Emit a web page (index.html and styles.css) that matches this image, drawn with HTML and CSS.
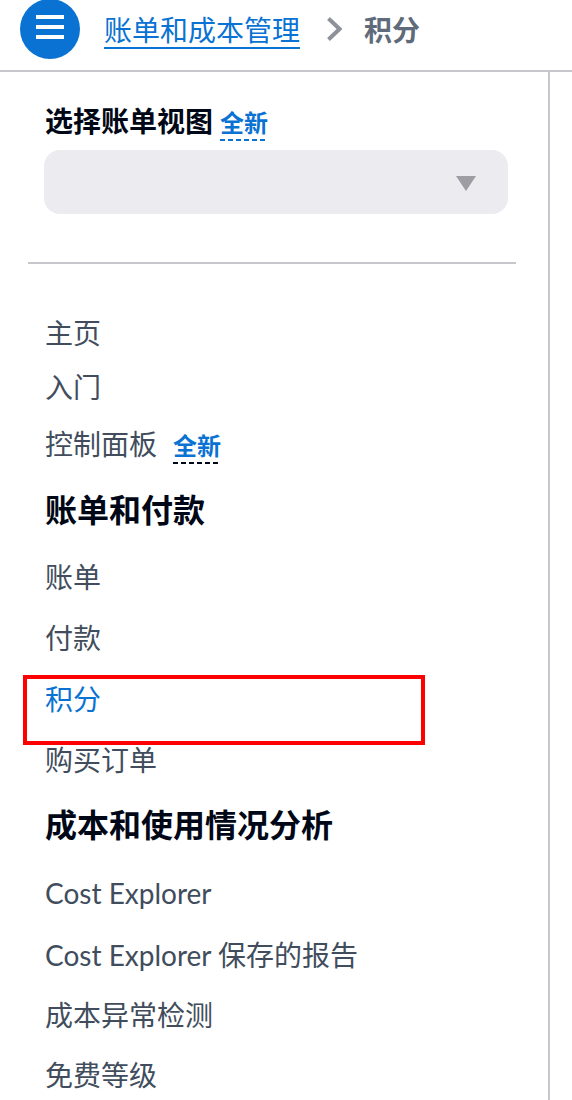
FILE: index.html
```html
<!DOCTYPE html>
<html lang="zh-CN">
<head>
<meta charset="utf-8">
<title>积分</title>
<link rel="stylesheet" href="styles.css">
</head>
<body>
<header class="top">
  <button class="menu" type="button" aria-label="打开导航">
    <span class="bar"></span><span class="bar"></span><span class="bar"></span>
  </button>
  <nav class="crumbs">
    <a class="crumb-link" href="#">账单和成本管理</a>
    <svg class="chev" width="16" height="26" viewBox="0 0 16 26" aria-hidden="true">
      <polyline points="2.5,2.5 13.5,13 2.5,23.5" fill="none" stroke="#8d9199" stroke-width="4" stroke-linejoin="miter"/>
    </svg>
    <span class="crumb-current">积分</span>
  </nav>
</header>
<div class="layout">
  <aside class="side">
    <div class="view">
      <div class="view-title">选择账单视图<span class="new new-title">全新</span></div>
      <div class="select"><span class="caret"></span></div>
    </div>
    <hr class="divider">
    <ul class="nav">
      <li class="item first">主页</li>
      <li class="item g1">入门</li>
      <li class="item g2">控制面板<span class="new new-item">全新</span></li>
      <li class="heading">账单和付款</li>
      <li class="item">账单</li>
      <li class="item">付款</li>
      <li class="item active">积分<span class="highlight"></span></li>
      <li class="item">购买订单</li>
      <li class="heading h2">成本和使用情况分析</li>
      <li class="item">Cost Explorer</li>
      <li class="item c2">Cost Explorer 保存的报告</li>
      <li class="item c3">成本异常检测</li>
      <li class="item c3">免费等级</li>
    </ul>
  </aside>
</div>
</body>
</html>
```

FILE: styles.css
```css
* { box-sizing: border-box; }
html, body { margin: 0; padding: 0; background: #ffffff; }
body {
  font-family: Lato, "Noto Sans CJK SC", sans-serif;
  color: #414d5c;
  width: 572px;
  height: 1100px;
  overflow: hidden;
}

.top {
  height: 72px;
  border-bottom: 2px solid #c6c6cd;
  display: flex;
  align-items: flex-start;
}
.menu {
  width: 60px;
  height: 60px;
  margin: -1px 0 0 20px;
  padding: 0 0 4px 0;
  border: 0;
  border-radius: 50%;
  background: #0972d3;
  display: flex;
  flex-direction: column;
  align-items: center;
  justify-content: center;
  gap: 6px;
}
.bar {
  display: block;
  width: 28px;
  height: 4px;
  background: #ffffff;
}
.crumbs {
  height: 58px;
  margin-left: 24px;
  display: flex;
  align-items: center;
}
.crumb-link {
  display: inline-block;
  font-size: 28px;
  line-height: 28px;
  color: #0972d3;
  text-decoration: none;
  padding-bottom: 3px;
  border-bottom: 2px solid #0972d3;
  margin-top: 6px;
}
.chev { margin-left: 26px; display: block; }
.crumb-current {
  margin-left: 22px;
  font-size: 28px;
  font-weight: 700;
  color: #5f6b7a;
}

.layout { display: flex; }
.side {
  width: 550px;
  height: 1028px;
  border-right: 2px solid #c6c6cd;
  padding-top: 29px;
}
.view { padding-left: 44px; }
.view-title {
  font-size: 28px;
  font-weight: 700;
  line-height: 40px;
  color: #000716;
  padding-left: 1px;
}
.new {
  display: inline-block;
  font-size: 24px;
  line-height: 24px;
  font-weight: 700;
  color: #0972d3;
  padding-bottom: 6px;
  margin-bottom: -1px;
  background-repeat: repeat-x;
  background-position: left bottom;
  background-size: 8px 2px;
}
.new-title {
  margin-left: 7px;
  background-image: linear-gradient(to right, #0972d3 0 5px, transparent 5px 8px);
}
.new-item {
  margin-left: 16px;
  background-image: linear-gradient(to right, #000716 0 5px, transparent 5px 8px);
}
.select {
  width: 464px;
  height: 64px;
  margin-top: 9px;
  border-radius: 16px;
  background: #ebebf0;
  display: flex;
  align-items: center;
  justify-content: flex-end;
  padding-right: 32px;
}
.caret {
  width: 0;
  height: 0;
  border-left: 10px solid transparent;
  border-right: 10px solid transparent;
  border-top: 15px solid #9d9da3;
  margin-top: 2px;
}
.divider {
  margin: 48px 0 0 28px;
  width: 488px;
  height: 2px;
  border: 0;
  background: #c6c6cd;
}

.nav {
  list-style: none;
  margin: 49px 0 0 0;
  padding: 0 0 0 45px;
}
.item {
  font-size: 28px;
  line-height: 40px;
  color: #414d5c;
  margin-top: 21px;
  white-space: nowrap;
}
.item.first { margin-top: 0; }
.item.g1 { margin-top: 14px; }
.item.g2 { margin-top: 17px; }
.heading {
  font-size: 32px;
  line-height: 44px;
  font-weight: 700;
  color: #000716;
  margin-top: 24px;
  white-space: nowrap;
}
.heading + .item { margin-top: 25px; }
.heading.h2 { margin-top: 23px; }
.h2 + .item { margin-top: 26px; }
.item.c2 { margin-top: 22px; }
.item.c3 { margin-top: 20px; }
.item.active {
  color: #0972d3;
  position: relative;
}
.highlight {
  position: absolute;
  left: -22px;
  top: -4px;
  width: 402px;
  height: 70px;
  border: 4px solid #ff0000;
}
```
